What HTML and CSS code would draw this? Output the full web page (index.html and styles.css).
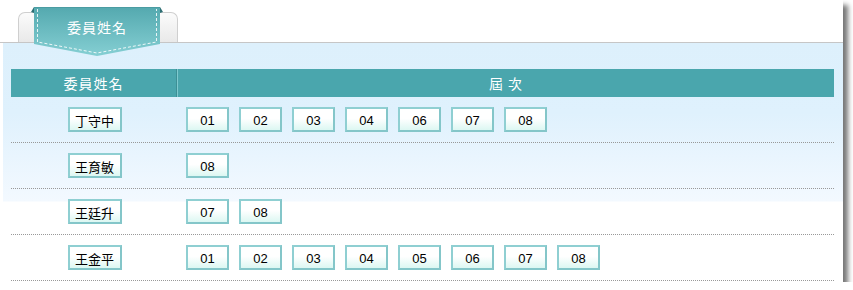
FILE: index.html
```html
<!DOCTYPE html>
<html lang="zh-Hant">
<head>
<meta charset="utf-8">
<title>委員姓名</title>
<link rel="stylesheet" href="styles.css">
</head>
<body>
<div class="panel">
  <div class="tabs">
    <div class="tab"></div>
    <div class="ribbon">
      <svg class="ribbon-svg" width="132" height="52" viewBox="0 0 132 52">
        <defs>
          <linearGradient id="rg" x1="0" y1="0" x2="0" y2="1">
            <stop offset="0" stop-color="#54a9af"/>
            <stop offset="1" stop-color="#85cfd3"/>
          </linearGradient>
        </defs>
        <path d="M0 5 L3 0 L3 6 Z" fill="#2f6f74"/>
        <path d="M132 5 L129 0 L129 6 Z" fill="#2f6f74"/>
        <path d="M3 0 H129 V37 L66 49 L3 37 Z" fill="url(#rg)"/>
        <path d="M3 0.5 H129" stroke="#4a9ca2" stroke-width="1"/>
        <path d="M6.5 2 V35 L66 46 L125.5 35 V2" fill="none" stroke="#ffffff" stroke-width="1" stroke-dasharray="3 2" opacity="0.85"/>
      </svg>
      <span class="ribbon-text">委員姓名</span>
    </div>
  </div>
  <div class="content">
    <div class="table">
      <div class="row head">
        <div class="hcell name-col">委員姓名</div>
        <div class="hcell term-col">屆&nbsp;次</div>
      </div>
      <div class="row">
        <div class="cell name-cell"><span class="btn name-btn">丁守中</span></div>
        <div class="cell terms">
          <span class="btn">01</span><span class="btn">02</span><span class="btn">03</span><span class="btn">04</span><span class="btn">06</span><span class="btn">07</span><span class="btn">08</span>
        </div>
      </div>
      <div class="row">
        <div class="cell name-cell"><span class="btn name-btn">王育敏</span></div>
        <div class="cell terms">
          <span class="btn">08</span>
        </div>
      </div>
      <div class="row">
        <div class="cell name-cell"><span class="btn name-btn">王廷升</span></div>
        <div class="cell terms">
          <span class="btn">07</span><span class="btn">08</span>
        </div>
      </div>
      <div class="row">
        <div class="cell name-cell"><span class="btn name-btn">王金平</span></div>
        <div class="cell terms">
          <span class="btn">01</span><span class="btn">02</span><span class="btn">03</span><span class="btn">04</span><span class="btn">05</span><span class="btn">06</span><span class="btn">07</span><span class="btn">08</span>
        </div>
      </div>
    </div>
  </div>
</div>
</body>
</html>
```

FILE: styles.css
```css
* { box-sizing: border-box; }
html, body { margin: 0; padding: 0; background: #ffffff; }
body {
  font-family: "Liberation Sans", "Noto Sans CJK TC", sans-serif;
  font-size: 13px;
  color: #000;
}
.panel {
  width: 843px;
  height: 282px;
  background: #ffffff;
  box-shadow: 5px 5px 5px #777777;
  position: relative;
  overflow: visible;
}
.tabs {
  height: 43px;
  border-bottom: 1px solid #c6c6c6;
  position: relative;
  padding-top: 12px;
}
.tab {
  margin-left: 18px;
  width: 160px;
  height: 30px;
  border: 1px solid #cfcfcf;
  border-bottom: none;
  border-radius: 7px 7px 0 0;
  background: linear-gradient(to bottom, #fbfbfb, #e9e9e9);
}
.ribbon {
  position: absolute;
  left: 31px;
  top: 7px;
  width: 132px;
  height: 52px;
  z-index: 2;
}
.ribbon-svg { display: block; }
.ribbon-text {
  position: absolute;
  left: 0;
  right: 0;
  top: 12px;
  text-align: center;
  color: #ffffff;
  font-family: "Noto Sans CJK TC", sans-serif;
  font-size: 14px;
  line-height: 16px;
  letter-spacing: 1px;
}
.content {
  margin-left: 3px;
  height: 239px;
  padding: 26px 9px 0 8px;
  background: linear-gradient(to bottom, #ddf0fc 0px, #dff1fd 70px, #f3f9ff 158px, #ffffff 159px);
}
.row {
  display: grid;
  grid-template-columns: 166px 1fr;
  border-bottom: 1px dotted #999999;
}
.row.head {
  height: 28px;
  background: #4aa6ad;
  border-bottom: none;
}
.hcell {
  color: #ffffff;
  font-family: "Noto Sans CJK TC", sans-serif;
  font-size: 14px;
  line-height: 28px;
  text-align: center;
}
.hcell.name-col {
  border-right: 1px solid #3d8f95;
  letter-spacing: 1px;
}
.hcell.term-col {
  border-left: 1px solid #7fcacf;
  letter-spacing: 1px;
}
.cell {
  padding: 10px 0;
  height: 45px;
}
.name-cell {
  display: flex;
  justify-content: center;
}
.terms {
  display: flex;
  gap: 10px;
  padding-left: 9px;
}
.btn {
  display: flex;
  align-items: center;
  justify-content: center;
  width: 43px;
  height: 25px;
  border: 2px solid #8fcfd2;
  border-right-color: #84c6c9;
  border-bottom-color: #84c6c9;
  background: linear-gradient(to bottom, #ffffff 0%, #ffffff 45%, #dcf7f2 100%);
  font-size: 13px;
  line-height: 15px;
  padding-top: 1px;
}
.name-btn {
  width: 54px;
  margin-left: 1px;
  font-family: "Noto Sans CJK TC", sans-serif;
  font-size: 13px;
}
```
